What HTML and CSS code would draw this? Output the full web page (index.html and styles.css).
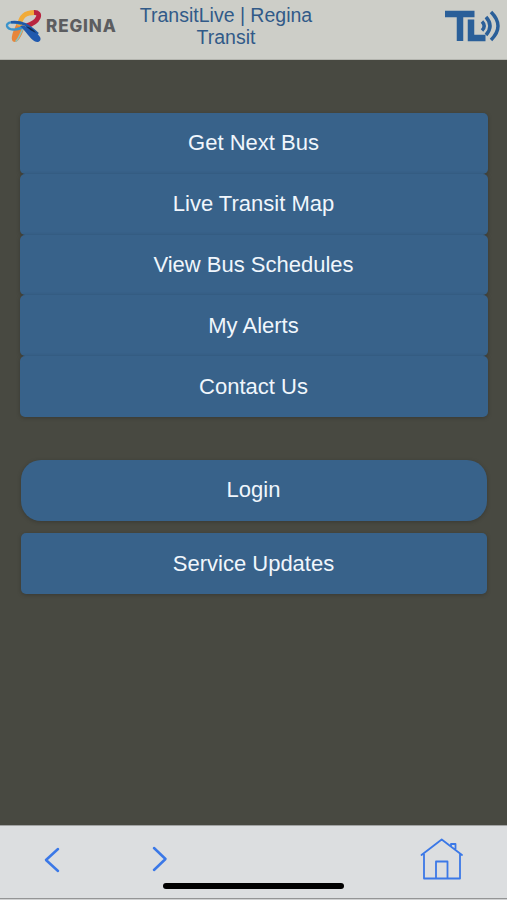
FILE: index.html
```html
<!DOCTYPE html>
<html lang="en">
<head>
  <meta charset="UTF-8" />
  <meta name="viewport" content="width=device-width, initial-scale=1.0"/>
  <title>TransitLive | Regina Transit</title>
  <link rel="stylesheet" href="styles.css">
</head>
<body>
  <header class="header">
    <a class="brand" href="#">
      <svg class="brand-mark" viewBox="0 0 42 42" fill="none">
        <path d="M9 37.500 C6 35 9 27 13 19 L21 21 C19 29 15 38 11 38 Z" fill="#e8853a"/>
        <path d="M11.500 37.500 C15 35 16 29 20 23" stroke="#86c5c4" stroke-width="1.500"/>
        <path d="M15 22 C17 12 21 8.500 31 8.500" stroke="#f1ab38" stroke-width="4.800"/>
        <path d="M30 8.500 C38 8 36 18 22 22" stroke="#b9243f" stroke-width="4.800"/>
        <path d="M20 22 C13 27.500 4 26 3 22 C2.500 18 10 17 17 20" stroke="#3a93cb" stroke-width="2.400"/>
        <path d="M7 18.300 C18 17 24 21 34 30" stroke="#1f5aa8" stroke-width="2.600"/>
        <path d="M16 22 C22 20 32 27 36 33 C38 37 34 39 31 37.500 C26 35 22 27 16 22 Z" fill="#2059ae"/>
        <path d="M22 22.500 C26 23 30 26 32 29 L27 26.500 Z" fill="#14294d"/>
      </svg>
      <span class="brand-name">REGINA</span>
    </a>
    <h1 class="title">TransitLive | Regina Transit</h1>
    <svg class="tl-logo" viewBox="0 0 56 34" fill="none" stroke="#2a5f99">
      <path d="M0 6 H29.500 M15 4 V33" stroke-width="6.500"/>
      <path d="M26 11.500 V30 H40.500" stroke-width="6.500"/>
      <path d="M37 13.500 Q41.500 18 37 22.500" stroke-width="3.500"/>
      <path d="M41 9 Q49 18 41 27" stroke-width="3.500"/>
      <path d="M46 4 Q60 18 46 32" stroke-width="3.500"/>
    </svg>
  </header>

  <main class="content">
    <nav class="menu">
      <a class="btn" href="#">Get Next Bus</a>
      <a class="btn" href="#">Live Transit Map</a>
      <a class="btn" href="#">View Bus Schedules</a>
      <a class="btn" href="#">My Alerts</a>
      <a class="btn" href="#">Contact Us</a>
    </nav>
    <div class="actions">
      <a class="btn btn-round" href="#">Login</a>
      <a class="btn" href="#">Service Updates</a>
    </div>
  </main>

  <footer class="toolbar">
    <svg class="back" viewBox="0 0 16 28"><path d="M14 3 L2 14 L14 25"/></svg>
    <svg class="forward" viewBox="0 0 16 28"><path d="M2 3 L13.500 14 L2 25"/></svg>
    <svg class="home" viewBox="0 0 44 44">
      <path d="M1.500 17 L21.700 1.500 L42 17 M4 16 V40.500 H40 V16 M16 40.500 V23.500 H27.500 V40.500 M31 8.500 V6 H35.500 V12"/>
    </svg>
    <div class="home-indicator"></div>
  </footer>
</body>
</html>
```
FILE: styles.css
```css
* {
  box-sizing: border-box;
}

body {
  margin: 0;
  height: 900px;
  display: flex;
  flex-direction: column;
  font-family: "Liberation Sans", Arial, sans-serif;
  background: #484941;
}

a {
  text-decoration: none;
}

.header {
  display: flex;
  align-items: flex-start;
  height: 60px;
  padding: 4px 6px 0 4px;
  background: #cdcec8;
  border-bottom: 1px solid #b4b5af;
}

.brand {
  display: flex;
  align-items: center;
  width: 130px;
}

.brand-mark {
  width: 42px;
  height: 42px;
}

.brand-name {
  margin-top: 1px;
  font-family: Inter, sans-serif;
  font-weight: 800;
  font-size: 17px;
  letter-spacing: 0.9px;
  color: #5c5d60;
}

.title {
  width: 184px;
  margin: 0;
  font-size: 19.5px;
  font-weight: normal;
  line-height: 22px;
  text-align: center;
  color: #315a88;
}

.tl-logo {
  width: 56px;
  height: 34px;
  margin-top: 4px;
  margin-left: auto;
}

.content {
  flex: 1;
  padding: 53px 19px 0 20px;
}

.menu {
  display: flex;
  flex-direction: column;
}

.btn {
  display: flex;
  align-items: center;
  justify-content: center;
  height: 61px;
  padding-right: 1px;
  border-radius: 5px;
  background: #38628a;
  color: #f0f6fc;
  font-size: 22px;
  box-shadow: 0 1px 4px rgba(0, 0, 0, 0.22);
}

.menu .btn {
  height: 60.8px;
}

.actions {
  display: flex;
  flex-direction: column;
  gap: 12.4px;
  padding: 43px 1px 0;
}

.btn-round {
  border-radius: 20px;
}

.toolbar {
  position: relative;
  display: flex;
  align-items: flex-start;
  height: 75px;
  padding: 12px 43px 0 44px;
  background: #dcdee0;
  border-top: 1px solid #a2a3a3;
  box-shadow: inset 0 -1px 0 #d0d1d2, inset 0 -2px 0 #949596;
}

.toolbar svg {
  fill: none;
  stroke: #3b78e7;
  stroke-width: 2.5;
  stroke-linecap: round;
  stroke-linejoin: round;
}

.back,
.forward {
  width: 16px;
  height: 28px;
  margin-top: 8px;
}

.forward {
  margin: 7px 0 0 92px;
}

.toolbar .home {
  width: 44px;
  height: 44px;
  margin-left: auto;
  stroke-width: 1.8;
}

.home-indicator {
  position: absolute;
  bottom: 11px;
  left: 163px;
  width: 181px;
  height: 6px;
  border-radius: 3px;
  background: #000;
}
```
